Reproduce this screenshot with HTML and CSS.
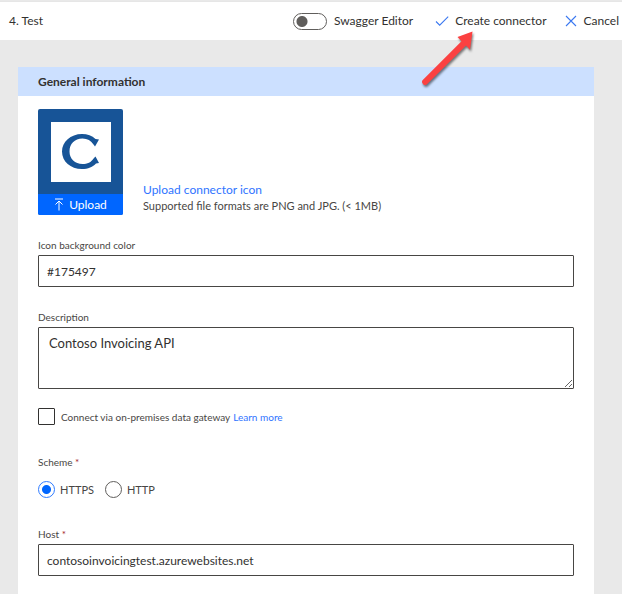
FILE: index.html
```html
<!DOCTYPE html>
<html lang="en">
<head>
<meta charset="utf-8">
<meta name="viewport" content="width=device-width, initial-scale=1">
<title>Custom connector</title>
<link rel="stylesheet" href="styles.css">
</head>
<body>
<header class="toolbar">
  <h1 class="step">4. Test</h1>
  <label class="switch"><input type="checkbox" role="switch">Swagger Editor</label>
  <button class="command create" type="button">
    <svg class="glyph" viewBox="0 0 14 14" aria-hidden="true"><path d="M1 7.5 L4.7 11.2 L13.2 2.7"/></svg>
    Create connector
    <svg class="pointer" viewBox="0 0 60 64" aria-hidden="true"><path d="M50.500 2.500 L35.500 8 L39.500 12.200 L1 50.800 A2.700 2.700 0 0 0 5.200 55 L44 16.500 L48 20.700 Z"/></svg>
  </button>
  <button class="command" type="button">
    <svg class="glyph" viewBox="0 0 14 14" aria-hidden="true"><path d="M2 2 L12 12 M12 2 L2 12"/></svg>
    Cancel
  </button>
</header>
<main class="page">
  <form class="card">
    <h2 class="band">General information</h2>
    <div class="fields">
      <div class="icon-row">
        <div class="tile">
          <div class="tile-art">
            <svg class="logo" viewBox="0 0 60 60" role="img" aria-label="Contoso logo"><rect width="60" height="60" fill="#fff"/><path fill="#175497" d="M48 17.500 L44 24.500 L42.500 22.500 C40 18.500 36.500 16.500 31.500 16.500 C23.500 16.500 18.500 22 18.500 29.500 C18.500 37 24 42 31.500 42 C36.500 42 40 40.500 43 36 L44.500 34.500 L48 41 L45 41.500 C42 45 37 47 31 47 C19.500 47 11 39.500 11 29.500 C11 20 19.500 12 31 12 C36.500 12 41 13.500 44.500 17 Z"/></svg>
          </div>
          <button class="upload" type="button">
            <svg class="up" viewBox="0 0 10 13" aria-hidden="true"><path d="M1 1 H9 M5 12.500 V3 M1.500 6.500 L5 3 L8.500 6.500"/></svg>
            Upload
          </button>
        </div>
        <div class="hint">
          <a class="upload-link" href="#">Upload connector icon</a>
          <p class="formats">Supported file formats are PNG and JPG. (&lt; 1MB)</p>
        </div>
      </div>
      <div class="field">
        <label class="caption" for="color">Icon background color</label>
        <input class="box" id="color" type="text" value="#175497">
      </div>
      <div class="field">
        <label class="caption" for="description">Description</label>
        <textarea class="box area" id="description">Contoso Invoicing API</textarea>
      </div>
      <div class="gateway">
        <input class="tick" id="gateway" type="checkbox">
        <label for="gateway">Connect via on-premises data gateway</label>
        <a href="#">Learn more</a>
      </div>
      <fieldset class="scheme">
        <legend class="caption">Scheme <span class="required">*</span></legend>
        <div class="options">
          <label class="option"><input class="radio" type="radio" name="scheme" checked>HTTPS</label>
          <label class="option"><input class="radio" type="radio" name="scheme">HTTP</label>
        </div>
      </fieldset>
      <div class="field">
        <label class="caption" for="host">Host <span class="required">*</span></label>
        <input class="box" id="host" type="text" value="contosoinvoicingtest.azurewebsites.net">
      </div>
    </div>
  </form>
</main>
</body>
</html>
```

FILE: styles.css
```css
* { box-sizing: border-box; }

body {
  margin: 0;
  min-height: 100vh;
  display: flex;
  flex-direction: column;
  background: #e9e9e9;
  color: #323130;
  font: 12px/16px Lato, "Open Sans", sans-serif;
}

h1, h2, p { margin: 0; }
a { color: #2f74ff; text-decoration: none; }
input, textarea, button { margin: 0; font: inherit; color: inherit; }

.toolbar {
  display: flex;
  align-items: center;
  height: 39px;
  margin-top: 1px;
  padding: 0 3px 0 9px;
  background: #fff;
  border-top: 1px solid #e6e6e6;
}
.step { flex: 1; font-size: 12px; font-weight: 400; }

.switch { display: flex; align-items: center; gap: 7px; margin-right: 22px; }
.switch input {
  appearance: none;
  width: 34px;
  height: 17px;
  border: 1px solid #605e5c;
  border-radius: 9px;
  background: radial-gradient(circle at 8px 50%, #605e5c 5px, transparent 6px) #fff;
}

.command {
  display: flex;
  align-items: center;
  gap: 6px;
  padding: 0;
  border: 0;
  background: none;
  white-space: nowrap;
}
.create { position: relative; margin-right: 17px; }
.glyph { width: 14px; height: 14px; fill: none; stroke: #3b78f0; stroke-width: 1.1; }
.pointer {
  position: absolute;
  top: 16px;
  left: -13px;
  width: 60px;
  height: 64px;
  fill: #fb4141;
  filter: drop-shadow(1px 2px 1px rgba(0, 0, 0, 0.5));
  pointer-events: none;
}

.page { flex: 1; display: flex; padding: 27px 28px 0 18px; }
.card { flex: 1; min-width: 0; background: #fff; }
.band {
  padding: 0 20px;
  background: #cce0ff;
  font-size: 12px;
  line-height: 29px;
  font-weight: 700;
}
.fields { padding: 13px 20px 16px; }

.icon-row { display: flex; align-items: flex-end; gap: 20px; margin-bottom: 22px; }
.tile { width: 85px; border-radius: 2px; overflow: hidden; background: #175497; }
.tile-art { display: grid; place-items: center; height: 85px; }
.logo { width: 60px; height: 60px; }
.upload {
  display: flex;
  align-items: center;
  justify-content: center;
  gap: 5px;
  width: 100%;
  height: 21px;
  padding: 0;
  border: 0;
  background: #0066ff;
  color: #fff;
}
.up { width: 10px; height: 13px; fill: none; stroke: #fff; }
.hint { padding-bottom: 1px; }
.formats { font-size: 11px; color: #484644; }

.field { display: flex; flex-direction: column; margin-bottom: 22px; }
.caption { margin-bottom: 2px; padding: 0; font-size: 10px; color: #484644; }
.required { color: #a4262c; }
.box {
  width: 100%;
  height: 32px;
  padding: 0 8px;
  border: 1px solid #484644;
  border-radius: 1px;
  background: #fff;
}
.area { height: 62px; padding: 7px 10px; font-size: 13px; resize: vertical; }

.gateway { display: flex; align-items: center; gap: 3px; margin: -3px 0 29px; font-size: 10px; color: #484644; }
.tick {
  appearance: none;
  width: 17px;
  height: 17px;
  margin-right: 3px;
  border: 1px solid #323130;
  border-radius: 1px;
}

.scheme { margin: 0 0 28px; padding: 0; border: 0; }
.options { display: flex; gap: 11px; padding-top: 9px; font-size: 11px; color: #484644; }
.option { display: flex; align-items: center; gap: 5px; }
.radio {
  appearance: none;
  width: 17px;
  height: 17px;
  border: 1px solid #605e5c;
  border-radius: 50%;
}
.radio:checked {
  border-color: #2f7bff;
  background: radial-gradient(circle, #0066ff 4px, transparent 5px);
}
```
